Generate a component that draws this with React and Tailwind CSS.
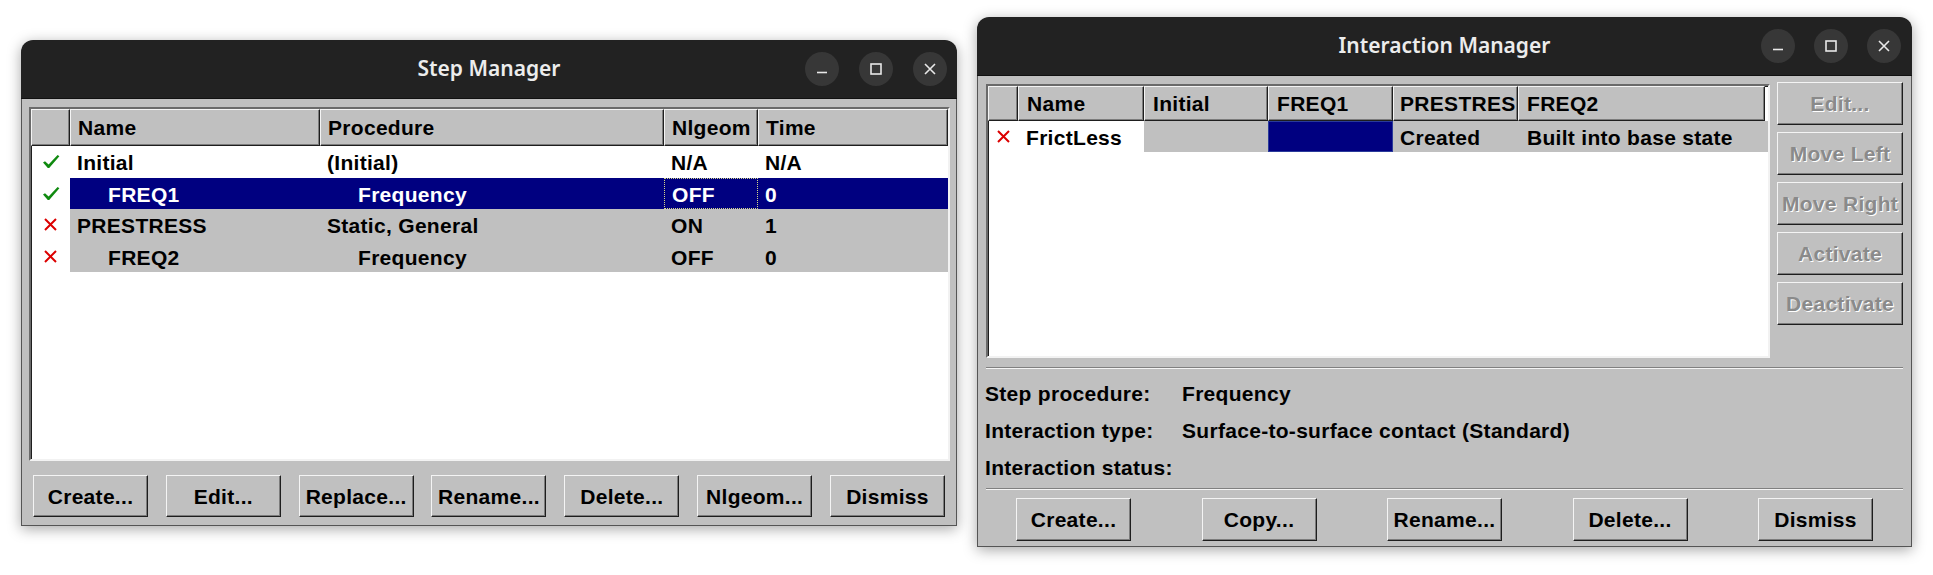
const raised =
  "border border-t-[#f4f4f4] border-l-[#f4f4f4] border-r-[#1e1e1e] border-b-[#1e1e1e] shadow-[inset_-1px_-1px_0_#7c7c7c]";

function WinButton({ kind }) {
  return (
    <div className="w-[34px] h-[34px] rounded-full bg-[#373737] flex items-center justify-center">
      <svg width="14" height="14" viewBox="0 0 14 14" fill="none" stroke="#e8e8e8" strokeWidth="1.6">
        {kind === "min" && <path d="M2 10.5h10" />}
        {kind === "max" && <rect x="2" y="2" width="10" height="10" />}
        {kind === "close" && <path d="M2 2l10 10M12 2L2 12" />}
      </svg>
    </div>
  );
}

function TitleBar({ title, h, pr, gap }) {
  return (
    <div className={`${h} bg-[#222222] rounded-t-[12px] grid grid-cols-[1fr_auto_1fr] items-center border-b border-[#111]`}>
      <div />
      <div className="font-['Noto_Sans',sans-serif] font-semibold text-[21px] text-[#ececec]">{title}</div>
      <div className={`flex justify-end ${pr} ${gap}`}>
        <WinButton kind="min" />
        <WinButton kind="max" />
        <WinButton kind="close" />
      </div>
    </div>
  );
}

function Check() {
  return (
    <svg width="18" height="15" viewBox="0 0 18 15">
      <path d="M1 8.5L3 7.2L6.6 10.6L15.6 1L17.4 2.2L7.2 14H5.8Z" fill="#0f8a0f" />
    </svg>
  );
}

function Cross() {
  return (
    <svg width="13" height="13" viewBox="0 0 13 13" stroke="#dc0000" strokeWidth="2">
      <path d="M1 1l11 11M12 1L1 12" />
    </svg>
  );
}

function Button({ label, w = "w-[115px]", h = "h-[42px]", disabled }) {
  return (
    <div
      className={`${w} ${h} ${raised} bg-[#c0c0c0] flex items-center justify-center pt-[1px] font-bold text-[21px] tracking-[0.3px] ${
        disabled ? "text-[#8a8a8a] [text-shadow:1px_1px_0_#ffffff]" : "text-black"
      }`}
    >
      {label}
    </div>
  );
}

function HeadCell({ w, label, pl = "pl-[7px]" }) {
  return (
    <div className={`${w} h-full ${raised} bg-[#c0c0c0] ${pl} pt-[1px] flex items-center overflow-hidden whitespace-nowrap font-bold text-[21px]`}>
      {label}
    </div>
  );
}

const steps = [
  { ok: true, name: "Initial", proc: "(Initial)", nl: "N/A", time: "N/A", bg: "bg-white", child: false },
  { ok: true, name: "FREQ1", proc: "Frequency", nl: "OFF", time: "0", bg: "bg-[#000080] text-white", child: true, sel: true },
  { ok: false, name: "PRESTRESS", proc: "Static, General", nl: "ON", time: "1", bg: "bg-[#c0c0c0]", child: false },
  { ok: false, name: "FREQ2", proc: "Frequency", nl: "OFF", time: "0", bg: "bg-[#c0c0c0]", child: true },
];

function StepManager() {
  return (
    <div className="mt-[40px] w-[936px] flex flex-col shadow-[0_3px_14px_rgba(0,0,0,0.35)] rounded-t-[12px]">
      <TitleBar title="Step Manager" h="h-[59px]" pr="pr-[10px]" gap="gap-[20px]" />
      <div className="bg-[#c0c0c0] border-x border-b border-[#555] pl-[7px] pr-[6px] pt-[8px] pb-[8px] flex flex-col">
        <div className="h-[354px] bg-white border-2 border-t-[#6a6a6a] border-l-[#6a6a6a] border-r-[#f2f2f2] border-b-[#f2f2f2] shadow-[inset_1px_1px_0_#1e1e1e] flex flex-col font-bold text-[21px] tracking-[0.3px]">
          <div className="h-[37px] flex bg-[#c0c0c0]">
            <HeadCell w="w-[39px]" label="" />
            <HeadCell w="w-[250px]" label="Name" />
            <HeadCell w="w-[344px]" label="Procedure" />
            <HeadCell w="w-[94px]" label="Nlgeom" />
            <HeadCell w="flex-1" label="Time" />
          </div>
          {steps.map((s) => (
            <div key={s.name} className="h-[31.5px] flex">
              <div className="w-[39px] flex items-center justify-center">{s.ok ? <Check /> : <Cross />}</div>
              <div className={`flex-1 flex ${s.bg}`}>
                <div className={`w-[250px] flex items-center pt-[2px] ${s.child ? "pl-[38px]" : "pl-[7px]"}`}>{s.name}</div>
                <div className={`w-[344px] flex items-center pt-[2px] ${s.child ? "pl-[38px]" : "pl-[7px]"}`}>{s.proc}</div>
                <div className={`w-[94px] flex items-center pt-[2px] pl-[7px] ${s.sel ? "border border-dotted border-[#d6d68a]" : ""}`}>{s.nl}</div>
                <div className="flex-1 flex items-center pt-[2px] pl-[7px]">{s.time}</div>
              </div>
            </div>
          ))}
        </div>
        <div className="mt-[14px] flex justify-between pl-[4px] pr-[5px]">
          {["Create...", "Edit...", "Replace...", "Rename...", "Delete...", "Nlgeom...", "Dismiss"].map((b) => (
            <Button key={b} label={b} />
          ))}
        </div>
      </div>
    </div>
  );
}

function InteractionManager() {
  return (
    <div className="mt-[17px] w-[935px] flex flex-col shadow-[0_3px_14px_rgba(0,0,0,0.35)] rounded-t-[12px]">
      <TitleBar title="Interaction Manager" h="h-[59px]" pr="pr-[11px]" gap="gap-[19px]" />
      <div className="bg-[#c0c0c0] border-x border-b border-[#555] px-[8px] pt-[8px] pb-[5px] flex flex-col">
        <div className="flex">
          <div className="w-[784px] h-[274px] bg-white border-2 border-t-[#6a6a6a] border-l-[#6a6a6a] border-r-[#f2f2f2] border-b-[#f2f2f2] shadow-[inset_1px_1px_0_#1e1e1e] flex flex-col font-bold text-[21px] tracking-[0.3px]">
            <div className="h-[35px] flex">
              <HeadCell w="w-[30px]" label="" />
              <HeadCell w="w-[126px]" label="Name" pl="pl-[8px]" />
              <HeadCell w="w-[124px]" label="Initial" pl="pl-[8px]" />
              <HeadCell w="w-[125px]" label="FREQ1" pl="pl-[8px]" />
              <HeadCell w="w-[125px]" label="PRESTRES" pl="pl-[6px]" />
              <HeadCell w="w-[247px]" label="FREQ2" pl="pl-[8px]" />
            </div>
            <div className="h-[31px] flex">
              <div className="w-[30px] flex items-center justify-center">
                <Cross />
              </div>
              <div className="w-[126px] flex items-center pt-[3px] pl-[8px]">FrictLess</div>
              <div className="w-[124px] bg-[#c0c0c0]" />
              <div className="w-[125px] bg-[#000080] border border-[#2a3a9a]" />
              <div className="w-[125px] bg-[#c0c0c0] flex items-center pt-[3px] pl-[7px]">Created</div>
              <div className="w-[250px] bg-[#c0c0c0] flex items-center pt-[3px] pl-[9px]">Built into base state</div>
            </div>
          </div>
          <div className="ml-[7px] -mt-[2px] w-[127px] flex flex-col gap-[7px]">
            {["Edit...", "Move Left", "Move Right", "Activate", "Deactivate"].map((b) => (
              <Button key={b} label={b} w="w-full" h="h-[43px]" disabled />
            ))}
          </div>
        </div>
        <div className="mt-[9px] h-[2px] border-t border-t-[#808080] border-b border-b-[#f4f4f4]" />
        <div className="mt-[6px] flex flex-col font-bold text-[21px] tracking-[0.3px]">
          {[
            ["Step procedure:", "Frequency"],
            ["Interaction type:", "Surface-to-surface contact (Standard)"],
            ["Interaction status:", ""],
          ].map(([k, v]) => (
            <div key={k} className="h-[37px] flex items-center">
              <div className="w-[197px] -ml-[1px]">{k}</div>
              <div>{v}</div>
            </div>
          ))}
        </div>
        <div className="mt-[2px] h-[2px] border-t border-t-[#808080] border-b border-b-[#f4f4f4]" />
        <div className="mt-[8px] flex justify-between px-[30px]">
          {["Create...", "Copy...", "Rename...", "Delete...", "Dismiss"].map((b) => (
            <Button key={b} label={b} h="h-[43px]" />
          ))}
        </div>
      </div>
    </div>
  );
}

export default function App() {
  return (
    <div className="w-[1933px] h-[575px] bg-white flex items-start pl-[21px] gap-[20px] font-['Liberation_Sans',Arial,sans-serif] text-black">
      <StepManager />
      <InteractionManager />
    </div>
  );
}
